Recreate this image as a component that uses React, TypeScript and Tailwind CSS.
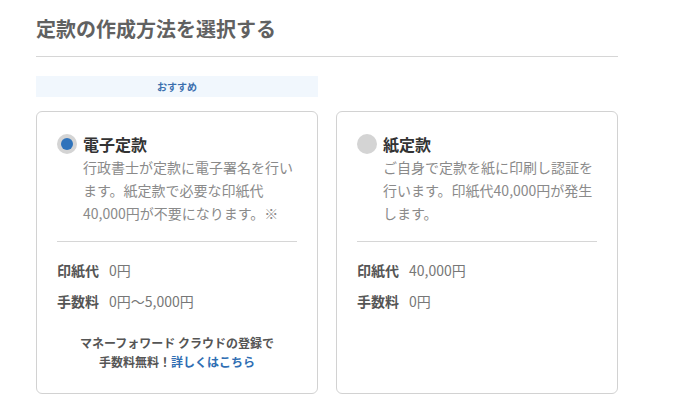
const font = { fontFamily: '"Noto Sans CJK JP", "Noto Sans", sans-serif' };

const options = [
  {
    id: "electronic",
    title: "電子定款",
    desc: "行政書士が定款に電子署名を行います。紙定款で必要な印紙代40,000円が不要になります。※",
    stamp: "0円",
    fee: "0円〜5,000円",
    selected: true,
  },
  {
    id: "paper",
    title: "紙定款",
    desc: "ご自身で定款を紙に印刷し認証を行います。印紙代40,000円が発生します。",
    stamp: "40,000円",
    fee: "0円",
    selected: false,
  },
];

function Radio({ on }: { on: boolean }) {
  return (
    <span className="mt-[1px] flex h-5 w-5 shrink-0 items-center justify-center rounded-full bg-[#d4d4d4]">
      {on && <span className="h-3 w-3 rounded-full bg-[#2f73bb]" />}
    </span>
  );
}

export default function App() {
  return (
    <div className="min-h-[416px] w-[678px] bg-white pl-9 pt-[14px]" style={font}>
      <div className="w-[582px]">
        <h2 className="text-[20px] font-bold leading-[30px] text-[#616161]">定款の作成方法を選択する</h2>
        <div className="mt-[12px] border-t border-[#d6d6d6]" />

        <div className="mt-[19px] grid grid-cols-2 gap-x-[18px]">
          <div className="flex h-[21px] items-center justify-center bg-[#f1f7fd] text-[10px] font-bold text-[#3b6fae]">
            おすすめ
          </div>
          <div />

          {options.map((o) => (
            <div
              key={o.id}
              className="mt-[14px] flex h-[283px] flex-col rounded-[6px] border border-[#d2d2d2] px-5 pt-[21px]"
            >
              <div className="flex gap-[6px]">
                <Radio on={o.selected} />
                <div>
                  <div className="text-[16px] font-bold leading-[22px] text-[#333]">{o.title}</div>
                  <p className="mt-[1px] text-[14px] leading-[23px] text-[#8a8a8a]">{o.desc}</p>
                </div>
              </div>

              <div className="mt-[16px] border-t border-[#d6d6d6]" />

              <div className="mt-[18px] flex items-center gap-[10px] text-[14px] leading-[20px]">
                <span className="font-bold text-[#555]">印紙代</span>
                <span className="text-[#777]">{o.stamp}</span>
              </div>
              <div className="mt-[11px] flex items-center gap-[10px] text-[14px] leading-[20px]">
                <span className="font-bold text-[#555]">手数料</span>
                <span className="text-[#777]">{o.fee}</span>
              </div>

              {o.selected && (
                <p className="mt-[22px] text-center text-[12px] font-bold leading-[19px] text-[#555]">
                  マネーフォワード クラウドの登録で
                  <br />
                  手数料無料！<span className="text-[#2f6eb3]">詳しくはこちら</span>
                </p>
              )}
            </div>
          ))}
        </div>
      </div>
    </div>
  );
}
